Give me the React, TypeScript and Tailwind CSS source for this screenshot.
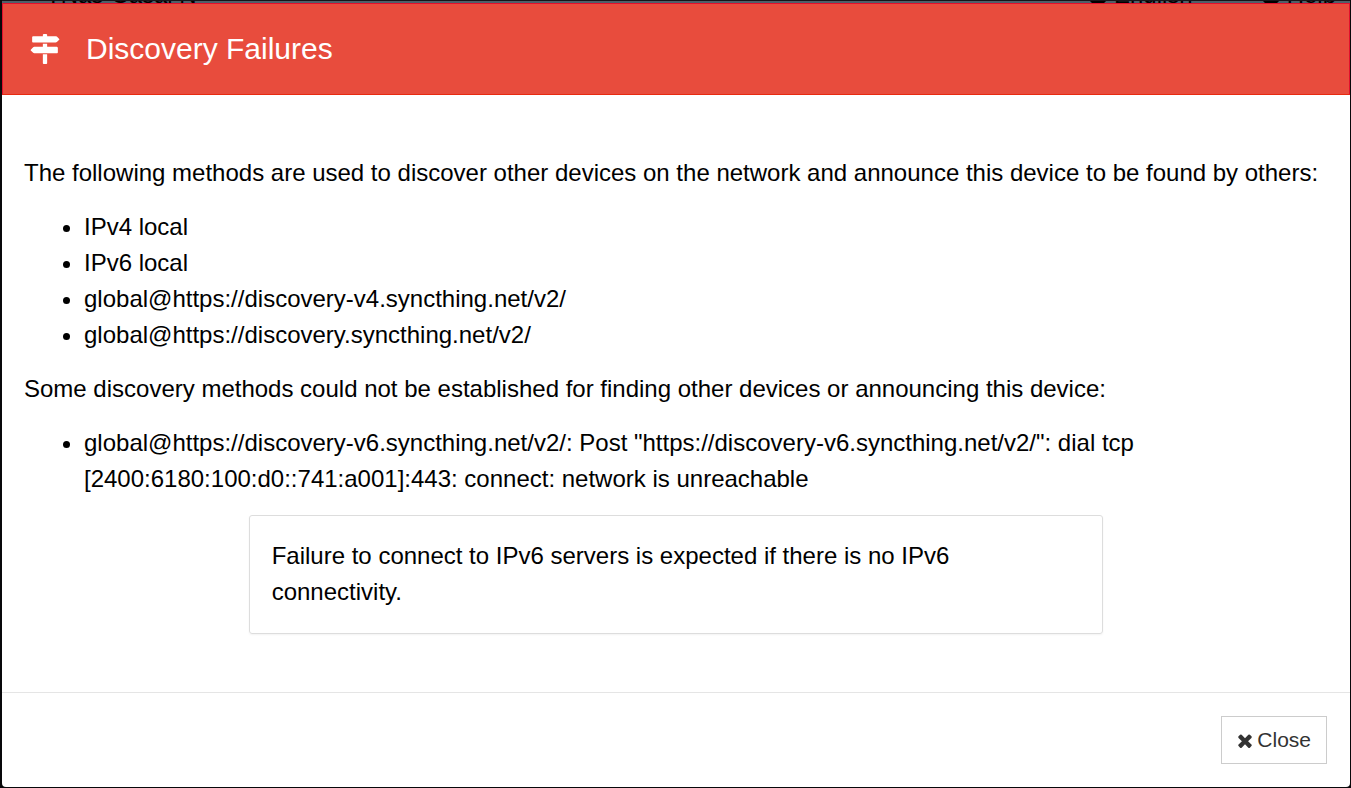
import React from 'react';

const workingMethods = [
  'IPv4 local',
  'IPv6 local',
  'global@https://discovery-v4.syncthing.net/v2/',
  'global@https://discovery.syncthing.net/v2/'
];

const failures = [
  {
    address: 'global@https://discovery-v6.syncthing.net/v2/',
    error: 'Post "https://discovery-v6.syncthing.net/v2/": dial tcp [2400:6180:100:d0::741:a001]:443: connect: network is unreachable'
  }
];

const MapSignsIcon: React.FC = () => (
  <svg viewBox="0 0 1792 1792" className="size-[30px] shrink-0" fill="currentColor" aria-hidden="true">
    <path d="M1745 297q10 10 10 23t-10 23l-141 141q-28 28-68 28h-1344q-26 0-45-19t-19-45v-256q0-26 19-45t45-19h576v-64q0-26 19-45t45-19h128q26 0 45 19t19 45v64h512q40 0 68 28zm-977 919h256v512q0 26-19 45t-45 19h-128q-26 0-45-19t-19-45v-512zm832-448q26 0 45 19t19 45v256q0 26-19 45t-45 19h-1344q-40 0-68-28l-141-141q-10-10-10-23t10-23l141-141q28-28 68-28h512v-192h256v192h576z" />
  </svg>
);

const TimesIcon: React.FC = () => (
  <svg viewBox="192 0 1408 1792" className="h-[21px] w-4 shrink-0" fill="currentColor" aria-hidden="true">
    <path d="M1490 1322q0 40-28 68l-136 136q-28 28-68 28t-68-28l-294-294-294 294q-28 28-68 28t-68-28l-136-136q-28-28-28-68t28-68l294-294-294-294q-28-28-28-68t28-68l136-136q28-28 68-28t68 28l294 294 294-294q28-28 68-28t68 28l136 136q28 28 28 68t-28 68l-294 294 294 294q28 28 28 68z" />
  </svg>
);

const DiscIcon: React.FC = () => (
  <svg viewBox="0 0 20 20" className="size-5" fill="currentColor" aria-hidden="true">
    <circle cx="10" cy="10" r="10" />
  </svg>
);

const App: React.FC = () => {
  return (
    <div className="flex min-h-screen flex-col bg-[#08080a] pr-px pb-px pl-[2px] font-['Liberation_Sans',Arial,sans-serif] text-2xl leading-9 text-black">
      {/* sliver of the page behind the dialog */}
      <nav className="flex h-[3px] shrink-0 items-end justify-between overflow-hidden border-t border-[#15151a] bg-[#4f5f68] pr-[14px] pl-11 leading-6">
        <span className="-mb-1">TNas-Casal N</span>
        <div className="-mb-1 flex gap-[68px]">
          <span className="flex items-center gap-[6px]">
            <DiscIcon />
            English
          </span>
          <span className="flex items-center gap-[6px]">
            <DiscIcon />
            Help
          </span>
        </div>
      </nav>

      <section
        role="dialog"
        aria-labelledby="dialog-title"
        className="flex flex-1 flex-col rounded-b bg-white"
      >
        <header className="flex items-center gap-[26px] border border-[#e3102c] border-b-[#e82a10] bg-[#e84c3d] px-[27px] py-[27px] text-white">
          <MapSignsIcon />
          <h1 id="dialog-title" className="text-3xl">Discovery Failures</h1>
        </header>

        <div className="flex-1 px-[22px] pt-[60px] pb-[57px]">
          <p className="mb-[18px]">
            The following methods are used to discover other devices on the network and announce this device to be found by others:
          </p>
          <ul className="mb-[18px] list-disc pl-[60px]">
            {workingMethods.map((method) => (
              <li key={method}>{method}</li>
            ))}
          </ul>
          <p className="mb-[18px]">
            Some discovery methods could not be established for finding other devices or announcing this device:
          </p>
          <ul className="mb-[18px] list-disc pr-40 pl-[60px]">
            {failures.map((failure) => (
              <li key={failure.address}>{`${failure.address}: ${failure.error}`}</li>
            ))}
          </ul>
          <div className="-mx-[22px] flex justify-center">
            <div className="w-2/3 px-[22px]">
              <div className="rounded-[3px] border border-[#dddddd] px-[22px] pt-[22px] pb-[23px] shadow-xs">
                <p>Failure to connect to IPv6 servers is expected if there is no IPv6 connectivity.</p>
              </div>
            </div>
          </div>
        </div>

        <footer className="flex justify-end border-t border-[#e5e5e5] p-[23px]">
          <button
            type="button"
            className="flex h-12 items-center gap-1 border border-[#cccccc] bg-white px-[15px] text-[21px] text-[#333333]"
          >
            <TimesIcon />
            Close
          </button>
        </footer>
      </section>
    </div>
  );
};

export default App;
